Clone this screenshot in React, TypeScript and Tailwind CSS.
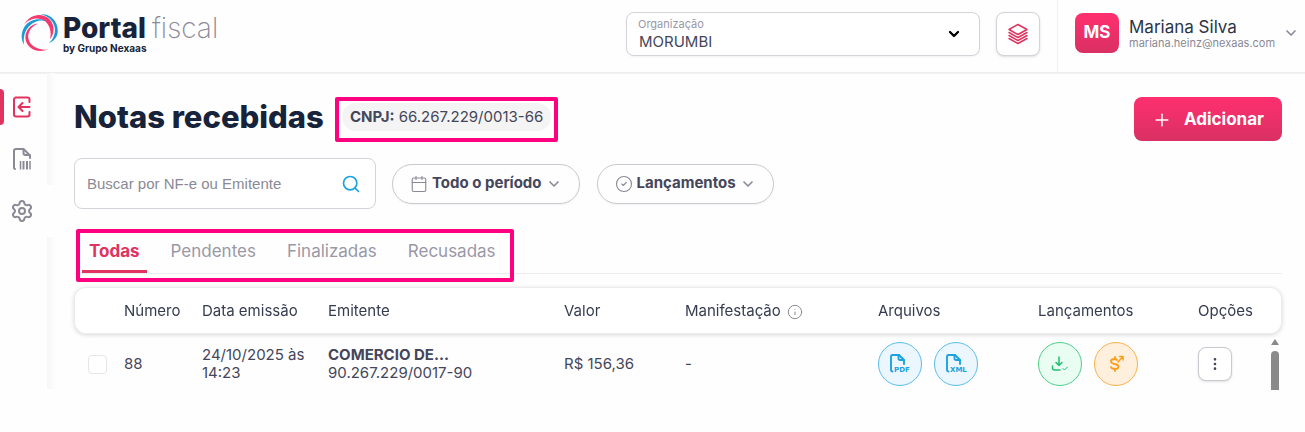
import { useState } from 'react';
import type { ReactNode } from 'react';
import { Calendar, ChevronDown, CircleCheck, EllipsisVertical, Info, Plus, Search, Settings } from 'lucide-react';
import clsx from 'clsx';

const TABS = ['Todas', 'Pendentes', 'Finalizadas', 'Recusadas'];

const NOTAS = [
  {
    numero: '88',
    data: '24/10/2025 às 14:23',
    emitente: 'COMERCIO DE...',
    cnpj: '90.267.229/0017-90',
    valor: 'R$ 156,36',
    manifestacao: '-',
  },
];

function LogoMark() {
  return (
    <svg width="38" height="38" viewBox="0 0 38 38" aria-hidden="true">
      <path fill="#1d9ad6" d="M19 .3C29-1 37 7 36.800 17C36.500 23 33 27 28 29C32 25.500 34.500 20 33.800 14C32.500 6 26 1.500 19 .3Z" />
      <path fill="#f4396f" d="M3 11C7 3 15 -.5 22 1.500C29 3.500 33 10 32.500 16C32.300 20 31 23 29 25C30.500 19 29.500 12 24.500 7.500C18 2.500 8 4 3 11Z" />
      <path fill="#1d9ad6" d="M25 7C18 3.500 9 5.500 4 12C0 18 -.5 25 3 30.500C2 23 4 15.500 9.500 11C14 7 19 5.500 25 7Z" />
      <path fill="#f4396f" d="M17 9.500C9 10 3.500 18 4.500 25C6 35 17 39.500 27 35.500C17 36.500 8.500 32 7.300 24C6.800 18 10 12.500 17 9.500Z" />
    </svg>
  );
}

function InboxIcon() {
  return (
    <svg width="24" height="24" viewBox="0 0 24 24" fill="none" stroke="currentColor" strokeWidth="2" strokeLinecap="round" strokeLinejoin="round">
      <path d="M19.500 7V4.500A2 2 0 0 0 17.500 2.500H6A2 2 0 0 0 4 4.500V19.500A2 2 0 0 0 6 21.500H17.500A2 2 0 0 0 19.500 19.500V17" />
      <path d="M19.500 12H9M12.500 8L8.500 12L12.500 16" />
    </svg>
  );
}

function BarcodeFileIcon() {
  return (
    <svg width="24" height="24" viewBox="0 0 24 24" fill="none" stroke="currentColor" strokeWidth="2" strokeLinecap="round" strokeLinejoin="round">
      <path d="M5 22A1.500 1.500 0 0 1 4 20.500V4A2 2 0 0 1 6 2H13.500L20 8.500V11" />
      <path d="M13.500 2.500V6A2 2 0 0 0 15.500 8H19.500" />
      <path d="M10.500 14V22.500M20 14V22.500" strokeWidth="1.500" strokeLinecap="butt" />
      <path d="M13.500 14V22.500M17 14V22.500" strokeLinecap="butt" />
    </svg>
  );
}

function LayersIcon() {
  return (
    <svg width="22" height="22" viewBox="0 0 22 22" fill="none" stroke="currentColor" strokeWidth="1.500" strokeLinecap="round" strokeLinejoin="round">
      <path d="M11 1.500L20 6.500L11 11.500L2 6.500Z" />
      <path d="M2 9.500L11 14.500L20 9.500M2 12.500L11 17.500L20 12.500M2 15.500L11 20.500L20 15.500" />
    </svg>
  );
}

function FileTypeIcon({ type }: { type: string }) {
  return (
    <svg width="22" height="22" viewBox="0 0 22 22" fill="none" stroke="currentColor" strokeWidth="1.900" strokeLinecap="round" strokeLinejoin="round">
      <path d="M3.500 18.500A1.500 1.500 0 0 1 2 17V3.500A1.500 1.500 0 0 1 3.500 2H10L15 7V11" />
      <path d="M9.500 2V5.500A1.500 1.500 0 0 0 11 7H15" />
      <text x="5" y="19" fontSize="7" fontWeight="700" fill="currentColor" stroke="none" fontFamily="DejaVu Sans, sans-serif">
        {type}
      </text>
    </svg>
  );
}

function DownloadCheckIcon() {
  return (
    <svg width="20" height="20" viewBox="0 0 20 20" fill="none" stroke="currentColor" strokeWidth="1.500" strokeLinecap="round" strokeLinejoin="round">
      <path d="M9 3V11M6 8.500L9 11.500L12 8.500" />
      <path d="M2.500 12V14A2 2 0 0 0 4.500 16H10" />
      <path d="M13 14.500L14.500 16L17.500 13" strokeWidth="1" />
    </svg>
  );
}

function DollarUpIcon() {
  return (
    <svg width="20" height="20" viewBox="0 0 20 20" fill="none" stroke="currentColor" strokeWidth="1.800" strokeLinecap="round" strokeLinejoin="round">
      <path d="M11 6C10.500 5 9.500 5 8.500 5C6.500 5 5 6 5 7.500C5 9 6 9.500 8.500 10C11.500 10.500 12.500 11 12.500 12.500C12.500 14 11 15 9 15C7 15 5.500 14.500 5 13M9 3V5M9 15V17" />
      <path d="M12 8L16.500 3M13.500 2.500H17V6" strokeWidth="1.500" />
    </svg>
  );
}

function NavItem({ label, active, plain, children }: { label: string; active?: boolean; plain?: boolean; children: ReactNode }) {
  return (
    <li className="flex h-13 items-stretch">
      <a
        href="#"
        aria-label={label}
        className={clsx('flex flex-1 items-center', active ? 'text-[#e0335f]' : 'text-[#8b8996]')}
      >
        <span className={clsx('mr-1.5 h-9 w-1 rounded-r-sm', active && 'bg-[#e0335f]')} />
        {children}
      </a>
      <span className={clsx('w-2', !plain && 'bg-linear-to-r from-[#f7f7f7] to-[#fdfdfd]')} />
    </li>
  );
}

function FilterPill({ icon, label }: { icon: ReactNode; label: string }) {
  return (
    <button className="flex h-10 items-center gap-1 rounded-full border border-[#c9c9cf] px-[17px] text-[15px] font-bold text-[#45465a] shadow-xs">
      <span className="text-[#8b8996]">{icon}</span>
      {label}
      <ChevronDown size={16} strokeWidth={2.5} className="text-[#8b8996]" />
    </button>
  );
}

function RoundAction({ label, className, children }: { label: string; className: string; children: ReactNode }) {
  return (
    <button aria-label={label} className={clsx('flex size-11 items-center justify-center rounded-full border', className)}>
      {children}
    </button>
  );
}

export default function App() {
  const [tab, setTab] = useState('Todas');
  const [busca, setBusca] = useState('');

  return (
    <div className="min-h-screen bg-[#fefefe] font-['Inter',sans-serif] text-[#45465a]">
      <header className="flex h-[73px] items-stretch border-b border-[#eeeef0] shadow-2xs">
        <a href="#" className="flex items-start gap-1 pt-3.5 pl-[21px]">
          <LogoMark />
          <span className="block">
            <span className="flex gap-1.5 text-[28px] leading-7 text-[#17233a]">
              <span className="font-extrabold">Portal</span>
              <span className="font-extralight text-[#8b8996]">fiscal</span>
            </span>
            <span className="block text-[10px] leading-3 font-bold text-[#17233a]">by Grupo Nexaas</span>
          </span>
        </a>

        <div className="ml-auto flex items-start gap-4 pt-3 pr-[17px]">
          <div className="relative w-[354px]">
            <label htmlFor="organizacao" className="absolute top-1.5 left-3 text-[11px] leading-3 text-[#9a98a6]">
              Organização
            </label>
            <select
              id="organizacao"
              className="h-11 w-full appearance-none rounded-lg border border-[#d3d3d9] bg-white pt-4 pl-3 text-[15px] text-[#45465a] shadow-xs"
            >
              <option>MORUMBI</option>
            </select>
            <ChevronDown size={16} strokeWidth={3.5} className="pointer-events-none absolute top-3.5 right-[18px] text-black" />
          </div>
          <button aria-label="Módulos" className="flex size-11 items-center justify-center rounded-lg border border-[#d3d3d9] bg-white text-[#e0335f] shadow-sm">
            <LayersIcon />
          </button>
        </div>

        <div className="flex w-[248px] items-start border-l border-[#f1f1f2] pt-[13px] pl-[17px]">
          <span className="flex h-10 w-11 items-center justify-center rounded-lg bg-linear-to-b from-[#ff2f6f] to-[#d93063] text-[17px] font-bold text-white">
            MS
          </span>
          <div className="ml-2.5 pt-1">
            <p className="text-[17px] leading-5 text-[#2b3448]">Mariana Silva</p>
            <p className="text-[11px] leading-3 text-[#8b8996]">mariana.heinz@nexaas.com</p>
          </div>
          <button aria-label="Menu do usuário" className="mt-3 ml-2 text-[#8b8996]">
            <ChevronDown size={16} strokeWidth={2.5} />
          </button>
        </div>
      </header>

      <div className="flex items-start">
        <nav className="flex h-[316px] w-[55px] flex-col">
          <ul>
            <li className="flex h-2 justify-end">
              <span className="w-2 bg-linear-to-r from-[#f7f7f7] to-[#fdfdfd]" />
            </li>
            <NavItem label="Notas recebidas" active>
              <InboxIcon />
            </NavItem>
            <NavItem label="Boletos">
              <BarcodeFileIcon />
            </NavItem>
            <NavItem label="Configurações" plain>
              <Settings size={24} strokeWidth={2} />
            </NavItem>
          </ul>
          <span className="w-2 flex-1 self-end bg-linear-to-r from-[#f7f7f7] to-[#fdfdfd]" />
        </nav>

        <main className="min-w-0 flex-1 pr-[23px] pl-[19px]">
          <div className="flex items-start pt-6">
            <h1 className="text-[31px] leading-10 font-extrabold text-[#17233a]">Notas recebidas</h1>
            <div className="ml-[11px] h-[45px] rounded-xs border-4 border-[#ff0080] px-[3px] pt-0.5">
              <p className="rounded-full bg-[#f4f4f4] px-2 text-[15px] leading-7">
                <strong>CNPJ:</strong> 66.267.229/0013-66
              </p>
            </div>
            <button className="ml-auto flex h-11 items-center gap-3 rounded-lg bg-linear-to-b from-[#ff2f6f] to-[#d93063] px-[18px] pt-0.5 text-[17px] font-bold text-white">
              <Plus size={20} strokeWidth={1.8} />
              Adicionar
            </button>
          </div>

          <div className="mt-4 flex items-center">
            <div className="relative w-[302px]">
              <input
                type="text"
                aria-label="Buscar por NF-e ou Emitente"
                placeholder="Buscar por NF-e ou Emitente"
                value={busca}
                onChange={(e) => setBusca(e.target.value)}
                className="h-[51px] w-full rounded-lg border border-[#d3d3d9] bg-white pr-12 pl-3 font-['Liberation_Sans',sans-serif] text-[15px] placeholder:text-[#8b8996]"
              />
              <Search size={20} className="absolute top-4 right-[15px] text-[#1ba3e0]" />
            </div>
            <div className="ml-4 flex gap-[17px]">
              <FilterPill icon={<Calendar size={18} strokeWidth={1.5} />} label="Todo o período" />
              <FilterPill icon={<CircleCheck size={18} strokeWidth={1.5} />} label="Lançamentos" />
            </div>
          </div>

          <div className="relative mt-5 border-b border-[#ececee]">
            <span className="pointer-events-none absolute -bottom-[9px] left-0.5 h-[53px] w-[438px] rounded-xs border-4 border-[#ff0080]" />
            <div role="tablist" className="flex gap-[17px] px-2">
              {TABS.map((t) => (
                <button
                  key={t}
                  role="tab"
                  aria-selected={tab === t}
                  onClick={() => setTab(t)}
                  className={clsx(
                    'h-11 border-b-3 px-[7px] pt-1 text-[17px]',
                    tab === t ? 'border-[#e0335f] font-bold text-[#e0335f]' : 'border-transparent text-[#9a98a6]'
                  )}
                >
                  {t}
                </button>
              ))}
            </div>
          </div>

          <div className="relative mt-[13px]">
            <table className="w-full table-fixed border-separate border-spacing-0 text-left">
              <colgroup>
                <col className="w-[50px]" />
                <col className="w-[78px]" />
                <col className="w-[126px]" />
                <col />
                <col className="w-[121px]" />
                <col className="w-[193px]" />
                <col className="w-[160px]" />
                <col className="w-[160px]" />
                <col className="w-[84px]" />
              </colgroup>
              <thead className="drop-shadow-sm">
                <tr className="h-[47px] text-[15px] text-[#363c50] *:border-y *:border-[#ececee] *:bg-white *:pt-0.5 *:font-normal">
                  <th className="rounded-l-xl border-l" />
                  <th>Número</th>
                  <th>Data emissão</th>
                  <th>Emitente</th>
                  <th>Valor</th>
                  <th>
                    <span className="flex items-center gap-1.5">
                      Manifestação
                      <Info size={16} strokeWidth={1.5} className="text-[#8b8996]" />
                    </span>
                  </th>
                  <th>Arquivos</th>
                  <th>Lançamentos</th>
                  <th className="rounded-r-xl border-r">Opções</th>
                </tr>
              </thead>
              <tbody>
                {NOTAS.map((n) => (
                  <tr key={n.numero} className="h-[60px] text-[15px] leading-[18px]">
                    <td className="pl-3.5">
                      <input
                        type="checkbox"
                        aria-label={`Selecionar nota ${n.numero}`}
                        className="block size-[19px] appearance-none rounded-sm border border-[#e6e6e9] bg-white"
                      />
                    </td>
                    <td>{n.numero}</td>
                    <td className="pr-4">{n.data}</td>
                    <td>
                      <strong className="block">{n.emitente}</strong>
                      {n.cnpj}
                    </td>
                    <td>{n.valor}</td>
                    <td>{n.manifestacao}</td>
                    <td>
                      <div className="flex gap-3">
                        <RoundAction label="Baixar PDF" className="border-[#5bbdea] bg-[#ebf6fe] text-[#1ba3e0]">
                          <FileTypeIcon type="PDF" />
                        </RoundAction>
                        <RoundAction label="Baixar XML" className="border-[#5bbdea] bg-[#ebf6fe] text-[#1ba3e0]">
                          <FileTypeIcon type="XML" />
                        </RoundAction>
                      </div>
                    </td>
                    <td>
                      <div className="flex gap-3">
                        <RoundAction label="Dar entrada" className="border-[#4fcf8d] bg-[#eafdf2] text-[#22c070]">
                          <DownloadCheckIcon />
                        </RoundAction>
                        <RoundAction label="Lançamento financeiro" className="border-[#fab04a] bg-[#fff0de] text-[#fb9e1c]">
                          <DollarUpIcon />
                        </RoundAction>
                      </div>
                    </td>
                    <td>
                      <button aria-label="Mais opções" className="flex size-[34px] items-center justify-center rounded-lg border border-[#c9c9cf] bg-white shadow-sm">
                        <EllipsisVertical size={16} />
                      </button>
                    </td>
                  </tr>
                ))}
              </tbody>
            </table>
            {/* scroll indicator of the list */}
            <div className="pointer-events-none absolute top-[52px] right-[3px] bottom-1 flex flex-col items-center gap-1.5">
              <svg width="8" height="6" viewBox="0 0 8 6" fill="#8a8a8a">
                <path d="M4 0L8 6H0Z" />
              </svg>
              <span className="w-2 flex-1 rounded-t-full bg-[#8a8a8a]" />
            </div>
          </div>
        </main>
      </div>
    </div>
  );
}
